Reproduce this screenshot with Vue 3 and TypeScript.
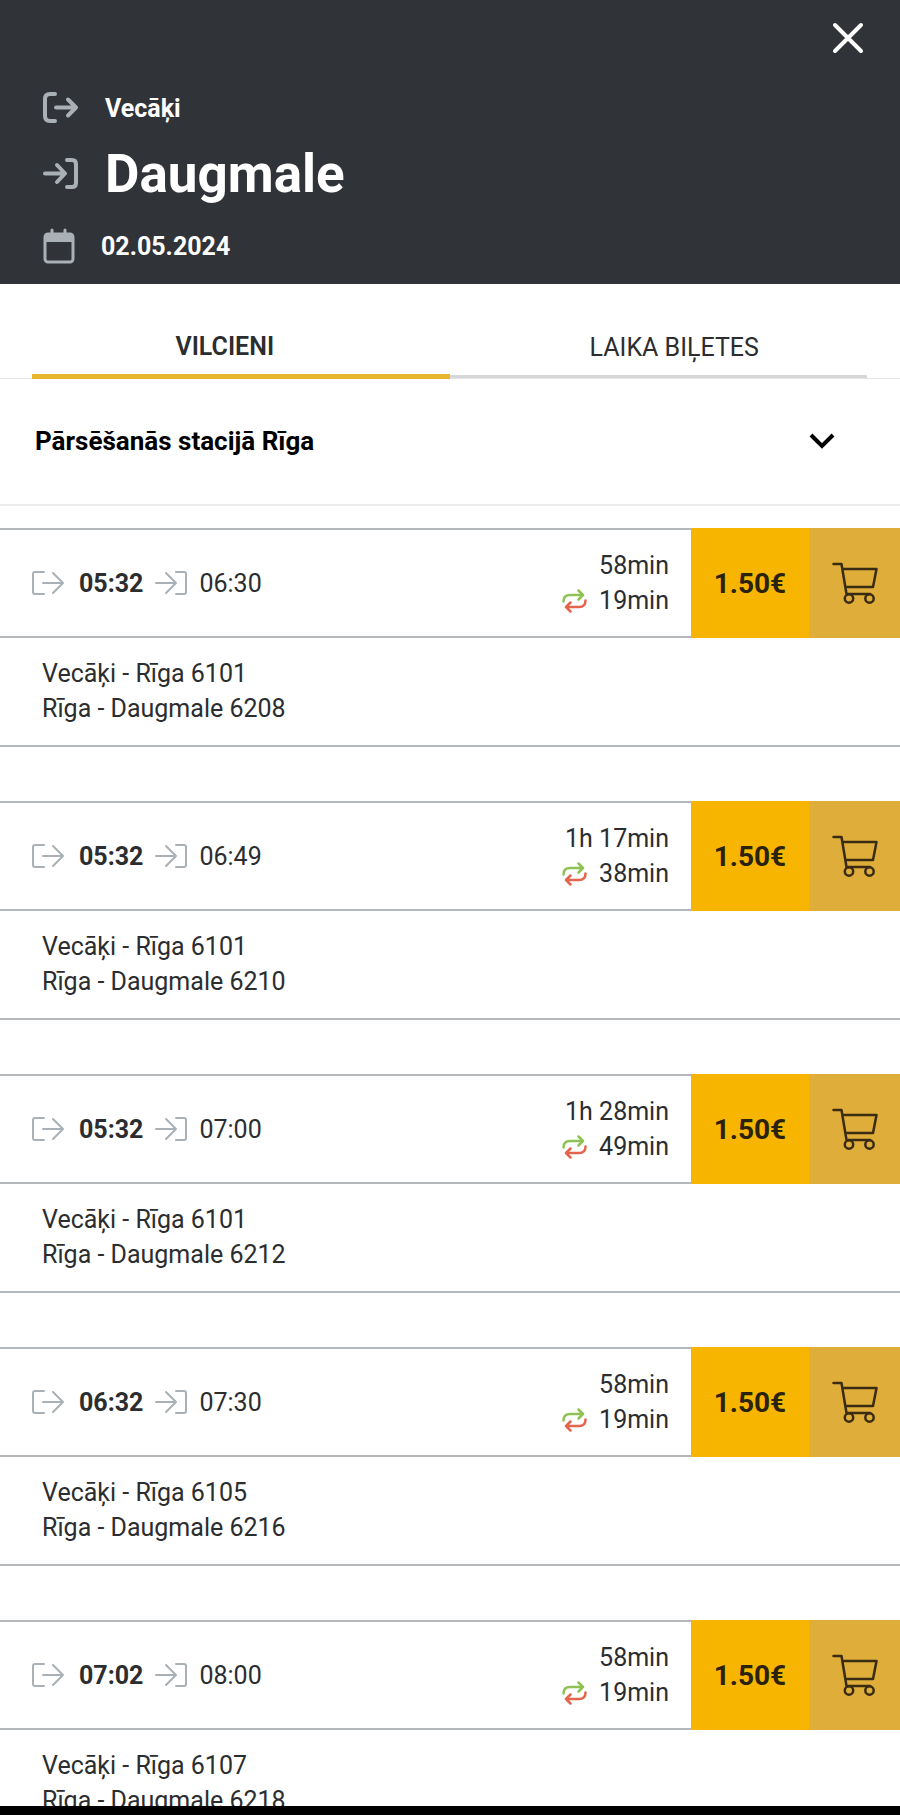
<script setup lang="ts">
interface Trip {
  depart: string
  arrive: string
  duration: string
  transfer: string
  legs: string[]
}

const trips: Trip[] = [
  { depart: '05:32', arrive: '06:30', duration: '58min', transfer: '19min', legs: ['Vecāķi - Rīga 6101', 'Rīga - Daugmale 6208'] },
  { depart: '05:32', arrive: '06:49', duration: '1h 17min', transfer: '38min', legs: ['Vecāķi - Rīga 6101', 'Rīga - Daugmale 6210'] },
  { depart: '05:32', arrive: '07:00', duration: '1h 28min', transfer: '49min', legs: ['Vecāķi - Rīga 6101', 'Rīga - Daugmale 6212'] },
  { depart: '06:32', arrive: '07:30', duration: '58min', transfer: '19min', legs: ['Vecāķi - Rīga 6105', 'Rīga - Daugmale 6216'] },
  { depart: '07:02', arrive: '08:00', duration: '58min', transfer: '19min', legs: ['Vecāķi - Rīga 6107', 'Rīga - Daugmale 6218'] },
]
</script>

<template>
  <div class="screen">
    <header class="head">
      <button class="close" type="button" aria-label="Aizvērt">
        <svg width="32" height="32" viewBox="0 0 32 32" fill="none" stroke="#fff" stroke-width="4" stroke-linecap="round">
          <path d="M3 3 29 29M29 3 3 29" />
        </svg>
      </button>
      <div class="line from">
        <svg class="ico" width="36" height="32" viewBox="0 0 36 32" fill="none" stroke-width="4" stroke-linecap="round" stroke-linejoin="round">
          <path d="M12 2H7Q2 2 2 7V24Q2 29 7 29H12M13 15.500H33M25 7.500 33 15.500 25 23.500" />
        </svg>
        <span>Vecāķi</span>
      </div>
      <div class="line to">
        <svg class="ico" width="36" height="32" viewBox="0 0 36 32" fill="none" stroke-width="4" stroke-linecap="round" stroke-linejoin="round">
          <path d="M24 2H29Q33 2 33 6V25Q33 29 29 29H24M2 15.500H22M14 7 22 15.500 14 24" />
        </svg>
        <h1>Daugmale</h1>
      </div>
      <div class="line date">
        <svg class="ico" width="32" height="36" viewBox="0 0 32 36" fill="none" stroke-width="3" stroke-linecap="round">
          <path d="M9 2V6M22 2V6" />
          <rect x="2" y="6" width="28" height="28" rx="3" />
          <path d="M2 8Q2 5 6 5H26Q30 5 30 8V14H2Z" fill="#a9b1b6" stroke="none" />
        </svg>
        <time datetime="2024-05-02">02.05.2024</time>
      </div>
    </header>

    <nav class="tabs" role="tablist">
      <button class="tab active" type="button" role="tab" aria-selected="true">VILCIENI</button>
      <button class="tab" type="button" role="tab" aria-selected="false">LAIKA BIĻETES</button>
    </nav>

    <button class="station" type="button" aria-expanded="false">
      <span>Pārsēšanās stacijā Rīga</span>
      <svg width="26" height="16" viewBox="0 0 26 16" fill="none" stroke="#000" stroke-width="4">
        <path d="M2 2 13 13 24 2" />
      </svg>
    </button>

    <main class="list">
      <article v-for="trip in trips" :key="trip.depart + trip.arrive" class="trip">
        <div class="row">
          <div class="info">
            <div class="times">
              <svg class="ico" width="32" height="24" viewBox="0 0 32 24" fill="none" stroke-width="2" stroke-linecap="round" stroke-linejoin="round">
                <path d="M12 1H3Q1 1 1 3V21Q1 23 3 23H12M11 12H31M21 2 31 12 21 22" />
              </svg>
              <b>{{ trip.depart }}</b>
              <svg class="ico" width="32" height="24" viewBox="0 0 32 24" fill="none" stroke-width="2" stroke-linecap="round" stroke-linejoin="round">
                <path d="M21 1H29Q31 1 31 3V21Q31 23 29 23H21M1 12H21M11 2 21 12 11 22" />
              </svg>
              <span>{{ trip.arrive }}</span>
            </div>
            <div class="durations">
              <span>{{ trip.duration }}</span>
              <span class="transfer">
                <svg width="25" height="24" viewBox="0 0 25 24" fill="none" stroke-width="2.500" stroke-linecap="round" stroke-linejoin="round">
                  <path stroke="#8fc254" d="M1.500 12.500Q1.500 6 8 6H21M16.500 1.500 21 6 16.500 10.500" />
                  <path stroke="#e2654c" d="M23.500 11.500Q23.500 18 17 18H4M8.500 13.500 4 18 8.500 22.500" />
                </svg>
                {{ trip.transfer }}
              </span>
            </div>
          </div>
          <button class="price" type="button">1.50€</button>
          <button class="cart" type="button" aria-label="Pievienot grozam">
            <svg width="46" height="42" viewBox="0 0 46 42" fill="none" stroke="#3a2c12" stroke-width="2.500" stroke-linejoin="round" stroke-linecap="round">
              <path d="M1.500 2H9.500L14.500 32H38M10.500 7H44.500L41 25H13.500" />
              <circle cx="17" cy="36.500" r="4.200" />
              <circle cx="37.500" cy="36.500" r="4.200" />
            </svg>
          </button>
        </div>
        <ul class="legs">
          <li v-for="leg in trip.legs" :key="leg">{{ leg }}</li>
        </ul>
      </article>
    </main>
    <div class="navbar"></div>
  </div>
</template>

<style>
body {
  margin: 0;
}
</style>

<style scoped>
.screen {
  display: flex;
  flex-direction: column;
  height: 100vh;
  overflow: hidden;
  background: #fff;
  color: #2b2d2f;
  font-family: Roboto, "Liberation Sans", sans-serif;
  font-size: 25px;
}
svg {
  display: block;
  flex: none;
}
.ico {
  stroke: #a9b1b6;
}
button {
  font: inherit;
  color: inherit;
  border: 0;
  padding: 0;
  background: none;
  cursor: pointer;
}
.head {
  flex: none;
  display: flex;
  flex-direction: column;
  padding: 22px 36px 20px 43px;
  background: #303338;
  color: #fff;
  font-weight: 700;
}
.close {
  align-self: flex-end;
}
.line {
  display: flex;
  align-items: center;
  gap: 26px;
}
.from {
  height: 36px;
  margin-top: 36px;
}
.to {
  height: 64px;
  margin-top: 16px;
}
.date {
  height: 36px;
  margin-top: 22px;
}
h1 {
  margin: 0;
  font-size: 53px;
  line-height: 64px;
}
.tabs {
  flex: none;
  display: flex;
  height: 94px;
  padding: 0 33px 0 32px;
  border-bottom: 1px solid #e4e4e4;
  margin-bottom: -1px;
}
.tab {
  flex: 1 1 0;
  height: 94px;
  padding: 36px 0 0 32px;
  border-bottom: 3px solid #d6d7d8;
}
.active {
  padding: 34px 32px 0 0;
  border-bottom: 5px solid #e8b52e;
  height: 95px;
  font-weight: 600;
}
.station {
  flex: none;
  display: flex;
  align-items: center;
  justify-content: space-between;
  height: 128px;
  padding: 0 65px 0 35px;
  border-bottom: 2px solid #ececec;
  color: #000;
  font-size: 26px;
  font-weight: 700;
}
.list {
  flex: 1;
  min-height: 0;
  overflow: hidden;
  padding-top: 22px;
}
.trip {
  margin-bottom: 54px;
}
.row {
  display: flex;
  height: 110px;
}
.info {
  flex: 1;
  display: flex;
  align-items: center;
  justify-content: space-between;
  padding: 0 22px 0 32px;
  border: solid #b4b8ba;
  border-width: 2px 0;
}
.times {
  display: flex;
  align-items: center;
  gap: 12px;
}
.times b {
  margin-left: 3px;
}
.durations {
  display: flex;
  flex-direction: column;
  align-items: flex-end;
  line-height: 35px;
}
.transfer {
  display: flex;
  align-items: center;
  gap: 12px;
}
.price {
  width: 118px;
  background: #f8b500;
  color: #2b220c;
  font-size: 28px;
  font-weight: 700;
}
.cart {
  display: flex;
  align-items: center;
  justify-content: center;
  width: 91px;
  background: #dfad3a;
}
.legs {
  margin: 0;
  padding: 18px 42px 19px;
  border-bottom: 2px solid #b4b8ba;
  list-style: none;
  line-height: 35px;
}
.navbar {
  flex: none;
  height: 9px;
  background: #000;
}
</style>
